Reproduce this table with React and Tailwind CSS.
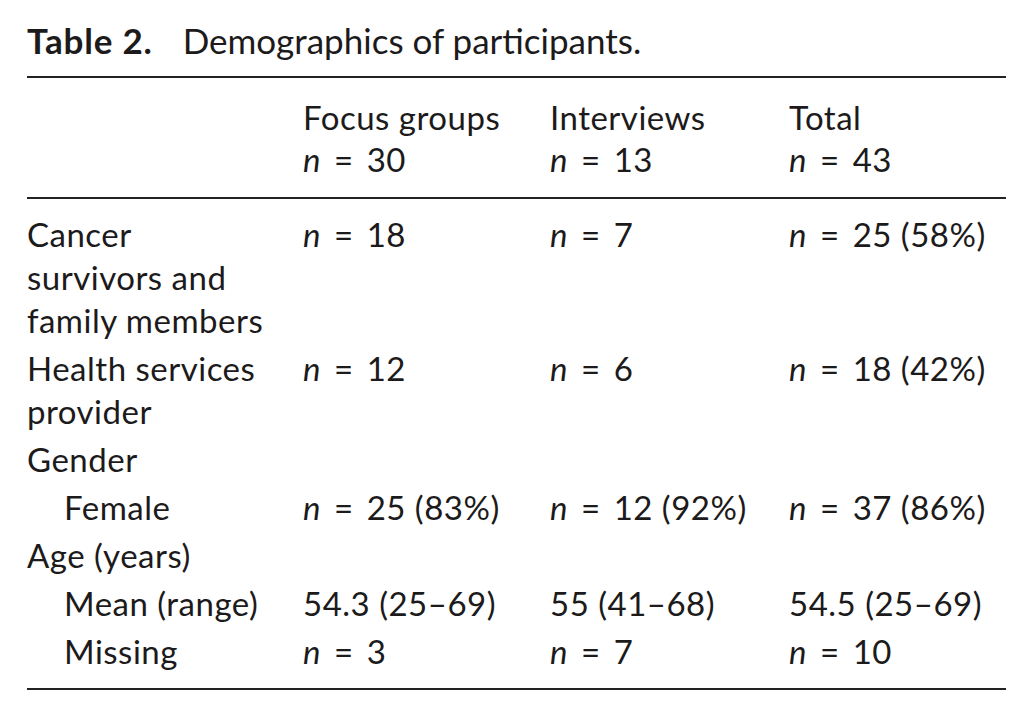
const rows = [
  { label: ["Cancer", "survivors and", "family members"], fg: ["n", "18"], iv: ["n", "7"], total: ["n", "25 (58%)"] },
  { label: ["Health services", "provider"], fg: ["n", "12"], iv: ["n", "6"], total: ["n", "18 (42%)"] },
  { label: ["Gender"] },
  { label: ["Female"], indent: true, fg: ["n", "25 (83%)"], iv: ["n", "12 (92%)"], total: ["n", "37 (86%)"] },
  { label: ["Age (years)"] },
  { label: ["Mean (range)"], indent: true, fg: [null, "54.3 (25–69)"], iv: [null, "55 (41–68)"], total: [null, "54.5 (25–69)"] },
  { label: ["Missing"], indent: true, fg: ["n", "3"], iv: ["n", "7"], total: ["n", "10"] },
];

function Value({ value }) {
  if (!value) return null;
  const [sym, text] = value;
  if (!sym) return <span>{text}</span>;
  return (
    <span className="whitespace-nowrap">
      <i>{sym}</i>
      <span className="px-[13px]">=</span>
      {text}
    </span>
  );
}

export default function App() {
  return (
    <div
      className="w-[1033px] h-[717px] bg-white text-[#1c1a1b] px-[27px] pt-[20px]"
      style={{ fontFamily: "Lato, 'Open Sans', sans-serif" }}
    >
      <h1 className="text-[35px] leading-[40px] mb-[16px]">
        <span className="font-bold tracking-[0.8px]">Table 2.</span>
        <span className="ml-[30px]">Demographics of participants.</span>
      </h1>

      <div className="border-t-2 border-b-2 border-[#222] text-[33px] tracking-[0.5px]">
        <div className="grid grid-cols-[276px_247px_239px_1fr] leading-[42.4px] pt-[18px] pb-[16px] border-b-2 border-[#222]">
          <div />
          <div>
            Focus groups
            <br />
            <Value value={["n", "30"]} />
          </div>
          <div>
            Interviews
            <br />
            <Value value={["n", "13"]} />
          </div>
          <div>
            Total
            <br />
            <Value value={["n", "43"]} />
          </div>
        </div>

        <div className="leading-[43px] pt-[11.5px] pb-[13px]">
          {rows.map((row, i) => (
            <div key={i} className="grid grid-cols-[276px_247px_239px_1fr] py-[2.5px]">
              <div className={row.indent ? "pl-[37px]" : ""}>
                {row.label.map((line, j) => (
                  <div key={j}>{line}</div>
                ))}
              </div>
              <div>
                <Value value={row.fg} />
              </div>
              <div>
                <Value value={row.iv} />
              </div>
              <div>
                <Value value={row.total} />
              </div>
            </div>
          ))}
        </div>
      </div>
    </div>
  );
}
